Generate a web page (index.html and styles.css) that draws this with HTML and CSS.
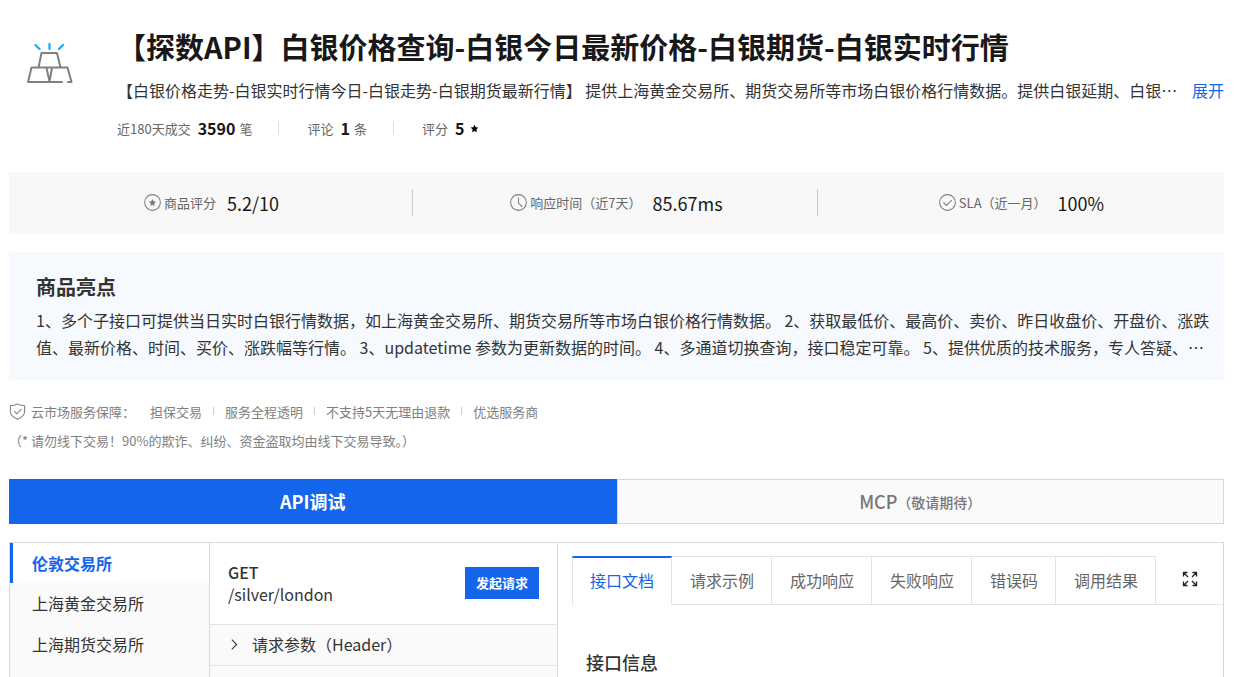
FILE: index.html
```html
<!DOCTYPE html>
<html lang="zh-CN">
<head>
    <meta charset="UTF-8">
    <meta name="viewport" content="width=device-width, initial-scale=1.0">
    <title>白银价格查询</title>
    <link rel="stylesheet" href="styles.css">
</head>
<body>
    <div class="page">
        <!-- 商品信息 -->
        <header class="product">
            <svg class="logo" viewBox="0 0 48 44" fill="none" stroke="#808080" stroke-width="2" stroke-linecap="round" stroke-linejoin="round">
                <path d="M9.500 3l4 4M23.500 2v5M37 3l-4 4" stroke="#1eaaf9" stroke-width="2.300"/>
                <path d="M12.500 25.500l3-14.500h15.500l3.500 14.500M36 40H2l3.500-14.500h36L45.500 40h-3.500M20.500 26L23.500 39.500 26 26"/>
            </svg>
            <div class="product-info">
                <h1>【探数API】白银价格查询-白银今日最新价格-白银期货-白银实时行情</h1>
                <div class="desc">
                    <p>【白银价格走势-白银实时行情今日-白银走势-白银期货最新行情】 提供上海黄金交易所、期货交易所等市场白银价格行情数据。提供白银延期、白银…</p>
                    <a href="#more">展开</a>
                </div>
                <ul class="numbers">
                    <li>近180天成交 <strong>3590</strong> 笔</li>
                    <li>评论 <strong>1</strong> 条</li>
                    <li>评分 <strong>5</strong>
                        <svg class="star" viewBox="0 0 10 10"><path d="M5 .8l1.300 2.800 3 .4-2.200 2.100.5 3L5 7.700 2.400 9.100l.5-3L.7 4l3-.4z"/></svg>
                    </li>
                </ul>
            </div>
        </header>

        <!-- 服务指标 -->
        <ul class="stats">
            <li>
                <svg class="icon" viewBox="0 0 16 16"><circle cx="8" cy="8" r="7.400"/><path class="solid" d="M8 4.700l1 2.200 2.400.3-1.800 1.600.5 2.400L8 10l-2.100 1.200.5-2.400-1.800-1.600L7 6.900z"/></svg>
                <span>商品评分</span>
                <b>5.2/10</b>
            </li>
            <li>
                <svg class="icon" viewBox="0 0 16 16"><circle cx="8" cy="8" r="7.400"/><path d="M8 3.500v5l3.500 3.500"/></svg>
                <span>响应时间（近7天）</span>
                <b>85.67ms</b>
            </li>
            <li>
                <svg class="icon" viewBox="0 0 16 16"><circle cx="8" cy="8" r="7.400"/><path d="M4.200 8l2.800 2.800 5-5"/></svg>
                <span>SLA（近一月）</span>
                <b>100%</b>
            </li>
        </ul>

        <!-- 商品亮点 -->
        <section class="highlight">
            <h2>商品亮点</h2>
            <p>1、多个子接口可提供当日实时白银行情数据，如上海黄金交易所、期货交易所等市场白银价格行情数据。 2、获取最低价、最高价、卖价、昨日收盘价、开盘价、涨跌值、最新价格、时间、买价、涨跌幅等行情。 3、updatetime 参数为更新数据的时间。 4、多通道切换查询，接口稳定可靠。 5、提供优质的技术服务，专人答疑、…</p>
        </section>

        <!-- 服务保障 -->
        <div class="guarantee">
            <svg class="icon" viewBox="0 0 16 16"><path d="M8 .8c2 1.200 4 1.700 6.700 1.800v5.200c0 3.600-2.700 5.900-6.700 7.500C4 13.700 1.300 11.400 1.300 7.800V2.600C4 2.500 6 2 8 .8zM4.800 7.600l2.500 2.600 4.300-4.500"/></svg>
            <span class="label">云市场服务保障：</span>
            <ul>
                <li>担保交易</li>
                <li>服务全程透明</li>
                <li>不支持5天无理由退款</li>
                <li>优选服务商</li>
            </ul>
        </div>
        <p class="notice">（* 请勿线下交易！90%的欺诈、纠纷、资金盗取均由线下交易导致。）</p>

        <div class="switch">
            <button class="active">API调试</button>
            <button>MCP<small>（敬请期待）</small></button>
        </div>

        <!-- 接口调试 -->
        <div class="panel">
            <nav class="api-list">
                <a class="active" href="#london">伦敦交易所</a>
                <a href="#shgold">上海黄金交易所</a>
                <a href="#shfutures">上海期货交易所</a>
            </nav>
            <div class="request">
                <div class="request-head">
                    <div class="path">
                        <strong>GET</strong>
                        <span>/silver/london</span>
                    </div>
                    <button class="send">发起请求</button>
                </div>
                <button class="fold">
                    <svg viewBox="0 0 12 12"><path d="M3.500 1.500L8 6l-4.500 4.500"/></svg>
                    请求参数（Header）
                </button>
            </div>
            <div class="docs">
                <div class="tabs">
                    <button class="active">接口文档</button>
                    <button>请求示例</button>
                    <button>成功响应</button>
                    <button>失败响应</button>
                    <button>错误码</button>
                    <button>调用结果</button>
                    <button class="full" aria-label="全屏">
                        <svg viewBox="0 0 16 16"><path d="M1.500 5.500v-4h4M1.500 1.500L6 6M10.500 1.500h4v4M14.500 1.500L10 6M1.500 10.500v4h4M1.500 14.500L6 10M14.500 10.500v4h-4M14.500 14.500L10 10"/></svg>
                    </button>
                </div>
                <h3>接口信息</h3>
            </div>
        </div>
    </div>
</body>
</html>
```

FILE: styles.css
```css
* {
    box-sizing: border-box;
}

body {
    margin: 0;
    font-family: "Noto Sans CJK SC", sans-serif;
    font-size: 16px;
    color: #333;
    background: #fff;
}

h1, h2, h3, p, ul {
    margin: 0;
    padding: 0;
}

ul {
    display: flex;
    list-style: none;
}

a {
    text-decoration: none;
}

button {
    font-family: inherit;
    cursor: pointer;
    border: none;
    background: none;
}

.page {
    display: flex;
    flex-direction: column;
    height: 100vh;
    padding: 22px 17px 0 9px;
    overflow: hidden;
}

.icon {
    width: 17px;
    height: 17px;
    flex: none;
    fill: none;
    stroke: #808080;
    stroke-width: 1;
}

.icon .solid {
    fill: #777;
    stroke: none;
}

/* 商品信息 */
.product {
    display: flex;
    gap: 43px;
}

.logo {
    width: 48px;
    height: 44px;
    margin: 20px 0 0 17px;
    flex: none;
}

.product-info {
    flex: 1;
    min-width: 0;
}

h1 {
    font-size: 29px;
    line-height: 48px;
    font-weight: 700;
    color: #181818;
    white-space: nowrap;
}

.desc {
    display: flex;
    justify-content: space-between;
    line-height: 40px;
}

.desc p {
    min-width: 0;
    overflow: hidden;
    white-space: nowrap;
    text-overflow: ellipsis;
}

.desc a {
    flex: none;
    color: #1366ec;
}

.numbers {
    height: 36px;
    align-items: center;
    font-size: 13px;
    color: #666;
}

.numbers li {
    display: flex;
    align-items: center;
    gap: 4px;
}

.numbers li + li::before {
    content: "";
    width: 1px;
    height: 14px;
    margin: 0 24px 0 26px;
    background: #ddd;
}

.numbers strong {
    margin-left: 3px;
    font-size: 16px;
    font-weight: 700;
    color: #181818;
}

.star {
    width: 9px;
    height: 9px;
    margin-left: 2px;
}

/* 服务指标 */
.stats {
    height: 62px;
    margin-top: 26px;
    padding-bottom: 1px;
    flex: none;
    background: #f8f8f8;
}

.stats li {
    display: flex;
    flex: 1;
    align-items: center;
    justify-content: center;
    position: relative;
    font-size: 13px;
    color: #666;
}

.stats li + li::before {
    content: "";
    position: absolute;
    left: -2px;
    width: 1px;
    height: 27px;
    background: #ccc;
}

.stats span {
    margin: 0 11px 0 3px;
}

.stats b {
    font-size: 18px;
    font-weight: 400;
    color: #181818;
}

/* 商品亮点 */
.highlight {
    height: 128px;
    margin-top: 18px;
    padding: 19px 12px 0 27px;
    flex: none;
    background: #f6f9fe;
}

h2 {
    font-size: 20px;
    line-height: 32px;
    font-weight: 700;
}

.highlight p {
    margin-top: 4px;
    line-height: 27px;
}

/* 服务保障 */
.guarantee {
    display: flex;
    align-items: center;
    height: 30px;
    margin-top: 16px;
    flex: none;
    font-size: 13px;
    color: #808080;
}

.guarantee .label {
    margin: 0 15px 0 5px;
}

.guarantee li {
    display: flex;
    align-items: center;
}

.guarantee li + li::before {
    content: "";
    width: 1px;
    height: 8px;
    margin: 0 11px;
    background: #ccc;
}

.notice {
    font-size: 13px;
    line-height: 30px;
    color: #808080;
}

/* 切换按钮 */
.switch {
    display: flex;
    height: 45px;
    margin-top: 23px;
    flex: none;
}

.switch button {
    flex: 1;
    padding-bottom: 3px;
    font-size: 18px;
    font-weight: 500;
    color: #777;
    background: #fafafa;
    border: 1px solid #d8d8d8;
}

.switch .active {
    font-weight: 700;
    color: #fff;
    background: #1366ec;
    border-color: #1366ec;
}

.switch small {
    font-size: 14px;
    vertical-align: 1px;
}

/* 接口调试 */
.panel {
    display: flex;
    flex: 1;
    min-height: 0;
    margin-top: 18px;
    border: 1px solid #d8d8d8;
    border-bottom: none;
}

.api-list {
    width: 200px;
    background: #fafafa;
    border-right: 1px solid #d8d8d8;
}

.api-list a {
    display: block;
    padding-left: 19px;
    line-height: 41px;
    color: #333;
    border-left: 3px solid transparent;
}

.api-list .active {
    line-height: 40px;
    font-weight: 700;
    color: #1366ec;
    background: #fff;
    border-left-color: #1366ec;
}

.request {
    width: 348px;
    background: #fafafa;
    border-right: 1px solid #d8d8d8;
}

.request-head {
    display: flex;
    align-items: center;
    justify-content: space-between;
    height: 82px;
    padding: 0 18px 2px;
    background: #fff;
    border-bottom: 1px solid #e3e3e3;
}

.path {
    display: flex;
    flex-direction: column;
    line-height: 22px;
}

.path strong {
    font-weight: 500;
}

.send {
    width: 74px;
    height: 32px;
    padding: 0;
    font-size: 13px;
    font-weight: 700;
    color: #fff;
    background: #1366ec;
}

.fold {
    display: flex;
    align-items: center;
    gap: 11px;
    width: 100%;
    height: 41px;
    padding: 0 18px 2px;
    font-size: 16px;
    color: #333;
    border-bottom: 1px solid #e3e3e3;
}

.fold svg {
    width: 13px;
    height: 13px;
    fill: none;
    stroke: #333;
}

.docs {
    flex: 1;
    padding: 13px 0 0 14px;
}

.tabs {
    display: flex;
    height: 49px;
}

.tabs button {
    padding: 0 17px 2px 18px;
    font-size: 16px;
    color: #666;
    border: 1px solid #e3e3e3;
    border-left: none;
}

.tabs .active {
    padding: 0 17px 4px;
    color: #1366ec;
    border-left: 1px solid #e3e3e3;
    border-top: 2px solid #1366ec;
    border-bottom: none;
}

.tabs .full {
    flex: 1;
    padding-bottom: 0;
    border-top: none;
    border-right: none;
}

.full svg {
    width: 16px;
    height: 16px;
    fill: none;
    stroke: #222;
    stroke-width: 1.3;
}

h3 {
    padding-left: 14px;
    margin-top: 43px;
    font-size: 18px;
    line-height: 28px;
    font-weight: 500;
}
```
